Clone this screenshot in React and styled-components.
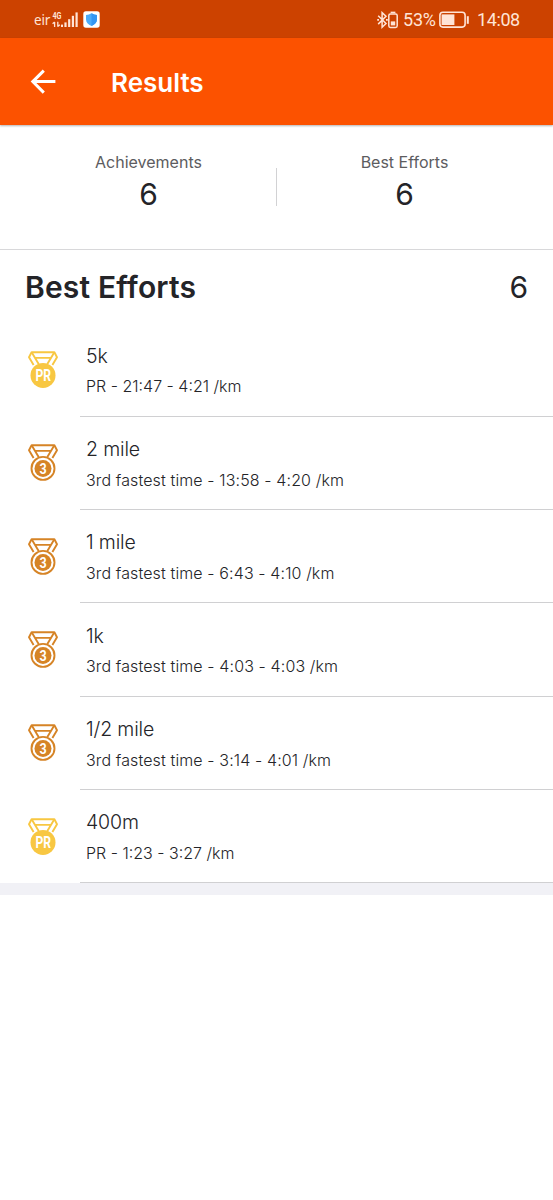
import styled, { createGlobalStyle } from 'styled-components';

const efforts = [
	{ name: '5k', medal: 'PR', detail: 'PR - 21:47 - 4:21 /km' },
	{ name: '2 mile', medal: '3', detail: '3rd fastest time - 13:58 - 4:20 /km' },
	{ name: '1 mile', medal: '3', detail: '3rd fastest time - 6:43 - 4:10 /km' },
	{ name: '1k', medal: '3', detail: '3rd fastest time - 4:03 - 4:03 /km' },
	{ name: '1/2 mile', medal: '3', detail: '3rd fastest time - 3:14 - 4:01 /km' },
	{ name: '400m', medal: 'PR', detail: 'PR - 1:23 - 3:27 /km' },
];

const SignalIcon = () => (
	<svg width="27" height="18" viewBox="0 0 27 18" fill="#ffe4d6">
		<text x="0.4" y="8" fontFamily="Roboto, sans-serif" fontSize="9" fontWeight="700" textLength="9" lengthAdjust="spacingAndGlyphs">4G</text>
		<path d="M2.6 11v5M5.8 10.8v5M0.6 12.8l2-1.8M5.8 15.6l2-1.8" stroke="#ffe4d6" strokeWidth="1.3" fill="none" />
		<rect x="9" y="13.6" width="2" height="2.4" />
		<rect x="12.4" y="11.4" width="2.2" height="4.6" />
		<rect x="16.1" y="8.2" width="2.2" height="7.8" />
		<rect x="19.8" y="4.8" width="2.2" height="11.2" />
		<rect x="23.5" y="1.4" width="2.2" height="14.6" />
	</svg>
);

const ShieldIcon = () => (
	<svg width="17" height="17" viewBox="0 0 17 17">
		<rect x="0.3" y="0.3" width="16.4" height="16.4" rx="2.6" fill="#fff" />
		<path d="M8.5 2.2q2.4 1.7 5.5 1.8v4.3c0 3.1-2.1 5.2-5.5 6.6-3.4-1.4-5.5-3.5-5.5-6.6V4q3.1-.1 5.5-1.8z" fill="#4cabf8" />
		<path d="M8.5 2.2q2.4 1.7 5.5 1.8v4.3c0 3.1-2.1 5.2-5.5 6.6z" fill="#3396f3" />
	</svg>
);

const BluetoothIcon = () => (
	<svg width="11" height="18" viewBox="0 0 11 18" fill="none" stroke="#ffe4d6" strokeWidth="1.5">
		<path d="M1.2 4.7l7.8 7.8-3.9 3.7V1.6L9 5.3l-7.8 7.8" />
		<path d="M0.2 8.9h1.8M9 8.9h1.8" strokeWidth="1.6" />
	</svg>
);

const DeviceBatteryIcon = () => (
	<svg width="10" height="18" viewBox="0 0 10 18" fill="none" stroke="#ffe4d6">
		<rect x="0.8" y="3" width="8.4" height="13.4" rx="1.6" strokeWidth="1.5" />
		<path d="M2.6 1.4h4.8" strokeWidth="1.5" />
		<rect x="2.8" y="10.4" width="4.4" height="4" fill="#ffe4d6" stroke="none" />
	</svg>
);

const BatteryIcon = () => (
	<svg width="31" height="18" viewBox="0 0 31 18" fill="none" stroke="#ffe4d6">
		<rect x="0.9" y="1.3" width="25.2" height="14.8" rx="3" strokeWidth="1.6" />
		<rect x="2.6" y="3.4" width="12.8" height="10.6" fill="#ffe4d6" stroke="none" />
		<path d="M28.8 5.2v7.6" strokeWidth="2" />
	</svg>
);

const BackArrow = () => (
	<svg width="26" height="26" viewBox="0 0 26 26" fill="none" stroke="#fff" strokeWidth="3">
		<path d="M13.8 1.6L2.8 12.6l11 11M3 12.6h22.4" />
	</svg>
);

const Ribbon = ({ color }) => (
	<g fill="none" stroke={color} strokeWidth="1.9" strokeLinejoin="round">
		<path d="M6.6 15L2 7.2 4.6 2.2h22.8l2.6 5-4.6 7.8" />
		<path d="M4.8 2.6l7 11.6M27.2 2.6l-7 11.6M8 7.9h16" />
	</g>
);

const Medal = ({ type }) => {
	const isPr = type === 'PR';
	const color = isPr ? '#f8c742' : '#d68426';
	return (
		<svg width="32" height="40" viewBox="0 0 32 40">
			<Ribbon color={color} />
			{isPr ? (
				<circle cx="16" cy="25.4" r="12.5" fill={color} />
			) : (
				<>
					<circle cx="16" cy="25.4" r="11.5" fill="#fff" stroke={color} strokeWidth="1.9" />
					<circle cx="16" cy="25.4" r="8.5" fill={color} />
				</>
			)}
			<MedalText
				x={isPr ? 8.4 : 12.4}
				y={isPr ? 31.2 : 30.7}
				textLength={isPr ? 15.6 : 7.2}
				lengthAdjust="spacingAndGlyphs"
				$size={isPr ? 16.5 : 15}
			>
				{type}
			</MedalText>
		</svg>
	);
};

const App = () => (
	<>
		<GlobalStyle />
		<Screen>
			<StatusBar>
				<StatusGroup>
					<Carrier>eir</Carrier>
					<SignalIcon />
					<AppBadge>
						<ShieldIcon />
					</AppBadge>
				</StatusGroup>
				<StatusGroup>
					<BluetoothIcon />
					<DeviceBatteryIcon />
					<Percent>53%</Percent>
					<BatteryIcon />
					<Clock>14:08</Clock>
				</StatusGroup>
			</StatusBar>
			<Header>
				<BackArrow />
				<Title>Results</Title>
			</Header>
			<Summary>
				<Stat>
					<StatLabel>Achievements</StatLabel>
					<StatValue>6</StatValue>
				</Stat>
				<StatDivider />
				<Stat>
					<StatLabel>Best Efforts</StatLabel>
					<StatValue>6</StatValue>
				</Stat>
			</Summary>
			<SectionHeader>
				<SectionTitle>Best Efforts</SectionTitle>
				<SectionCount>6</SectionCount>
			</SectionHeader>
			<EffortList>
				{efforts.map((effort) => (
					<EffortRow key={effort.name}>
						<MedalCell>
							<Medal type={effort.medal} />
						</MedalCell>
						<EffortBody>
							<EffortName>{effort.name}</EffortName>
							<EffortDetail $wide={effort.medal !== 'PR'}>{effort.detail}</EffortDetail>
						</EffortBody>
					</EffortRow>
				))}
			</EffortList>
			<FooterBand />
		</Screen>
	</>
);

export default App;

const GlobalStyle = createGlobalStyle`
	* {
		box-sizing: border-box;
	}

	body {
		margin: 0;
		background-color: #fff;
		font-family: Inter, 'Liberation Sans', sans-serif;
	}

	svg {
		display: block;
		flex-shrink: 0;
	}
`;

const Screen = styled.div`
	min-height: 1200px;
	background-color: #fff;
	color: #242428;
`;

const StatusBar = styled.div`
	display: flex;
	align-items: center;
	justify-content: space-between;
	height: 38px;
	padding: 1px 32px 0 34px;
	background-color: #cc4200;
	color: #ffe4d6;
	font-family: Roboto, sans-serif;
`;

const StatusGroup = styled.div`
	display: flex;
	align-items: center;
`;

const Carrier = styled.span`
	width: 18px;
	margin-top: 1px;
	font-family: 'Noto Sans', sans-serif;
	font-size: 13.5px;
	letter-spacing: -0.2px;
`;

const AppBadge = styled.span`
	margin-left: 4px;
`;

const Percent = styled.span`
	width: 36px;
	margin-left: 5px;
	font-size: 18px;
	letter-spacing: -0.2px;
`;

const Clock = styled.span`
	width: 44px;
	margin-left: 7px;
	font-size: 18px;
	letter-spacing: -0.4px;
	white-space: nowrap;
`;

const Header = styled.header`
	display: flex;
	align-items: center;
	height: 87px;
	padding: 1px 30px 0;
	gap: 55px;
	background-color: #fc5200;
	color: #fff;
	box-shadow: 0 1px 2px rgba(0, 0, 0, 0.3);
`;

const Title = styled.h1`
	margin: 0;
	padding-top: 1px;
	font-size: 26px;
	font-weight: 600;
	line-height: 32px;
`;

const Summary = styled.section`
	display: flex;
	height: 125px;
	padding: 27px 21px 0;
	border-bottom: 1px solid #d8d8da;
`;

const Stat = styled.div`
	flex: 1;
	display: flex;
	flex-direction: column;
	align-items: center;
`;

const StatLabel = styled.span`
	color: #5c5c60;
	font-size: 16px;
	line-height: 20px;
`;

const StatValue = styled.span`
	margin-top: 4px;
	font-size: 30px;
	line-height: 36px;
`;

const StatDivider = styled.div`
	width: 1px;
	height: 38px;
	margin-top: 16px;
	background-color: #d2d2d4;
`;

const SectionHeader = styled.div`
	display: flex;
	align-items: center;
	justify-content: space-between;
	height: 73.3px;
	padding: 1px 25px 0;
`;

const SectionTitle = styled.h2`
	margin: 0;
	font-size: 30px;
	font-weight: 600;
	letter-spacing: 0.15px;
	line-height: 36px;
`;

const SectionCount = styled.span`
	font-size: 30px;
	line-height: 36px;
`;

const EffortList = styled.ul`
	margin: 0;
	padding: 0;
	list-style: none;
`;

const EffortRow = styled.li`
	display: flex;
	height: 93.35px;
`;

const MedalCell = styled.div`
	width: 80px;
	padding: 26.7px 0 0 27px;
`;

const EffortBody = styled.div`
	flex: 1;
	display: flex;
	flex-direction: column;
	padding: 20.4px 0 0 6px;
	border-bottom: 1px solid #d0d0d2;
`;

const EffortName = styled.span`
	font-size: 19.5px;
	font-weight: 350;
	letter-spacing: -0.15px;
	line-height: 25px;
`;

const EffortDetail = styled.span`
	margin-top: 7.5px;
	font-size: 16px;
	font-weight: 350;
	letter-spacing: ${({ $wide }) => ($wide ? '0.12px' : '0')};
	line-height: 20px;
	white-space: nowrap;
`;

const FooterBand = styled.div`
	height: 12px;
	background-color: #f1f1f6;
`;

const MedalText = styled.text`
	fill: #fff;
	font-family: Roboto, sans-serif;
	font-size: ${({ $size }) => $size}px;
	font-weight: 700;
`;
